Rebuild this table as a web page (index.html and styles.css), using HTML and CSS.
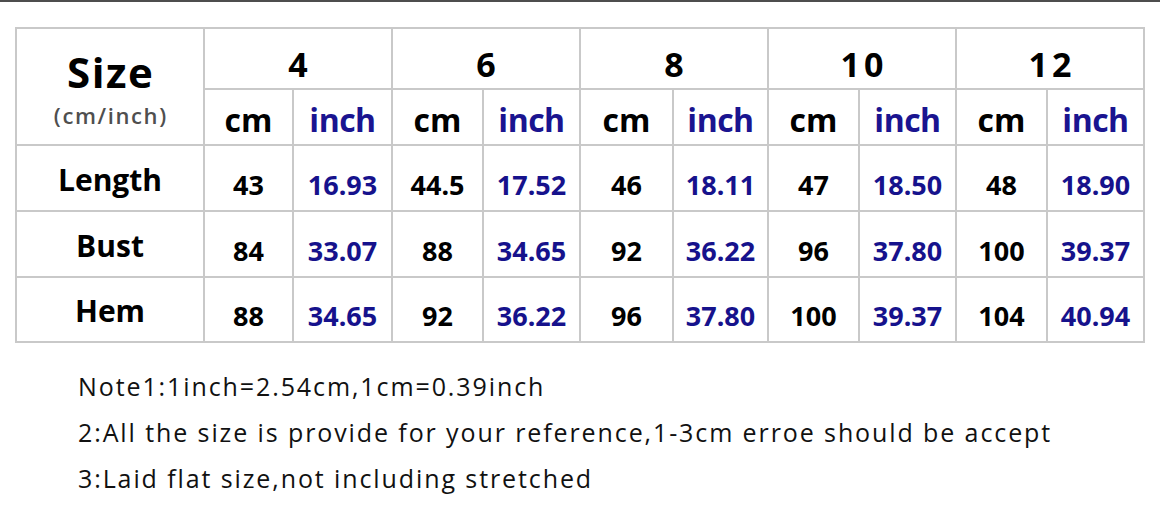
FILE: index.html
```html
<!DOCTYPE html>
<html>
<head>
<meta charset="utf-8">
<link rel="stylesheet" href="styles.css">
</head>
<body>
<div class="topbar"></div>
<div class="page">
  <div class="chart">
    <div class="cell corner"><span class="size">Size</span><span class="unit">(cm/inch)</span></div>
    <div class="cell num span2">4</div>
    <div class="cell num span2">6</div>
    <div class="cell num span2">8</div>
    <div class="cell num span2">10</div>
    <div class="cell num span2">12</div>
    <div class="cell hcm">cm</div><div class="cell hin">inch</div>
    <div class="cell hcm">cm</div><div class="cell hin">inch</div>
    <div class="cell hcm">cm</div><div class="cell hin">inch</div>
    <div class="cell hcm">cm</div><div class="cell hin">inch</div>
    <div class="cell hcm">cm</div><div class="cell hin">inch</div>

    <div class="cell label">Length</div>
    <div class="cell dcm">43</div><div class="cell din">16.93</div>
    <div class="cell dcm">44.5</div><div class="cell din">17.52</div>
    <div class="cell dcm">46</div><div class="cell din">18.11</div>
    <div class="cell dcm">47</div><div class="cell din">18.50</div>
    <div class="cell dcm">48</div><div class="cell din">18.90</div>

    <div class="cell label">Bust</div>
    <div class="cell dcm">84</div><div class="cell din">33.07</div>
    <div class="cell dcm">88</div><div class="cell din">34.65</div>
    <div class="cell dcm">92</div><div class="cell din">36.22</div>
    <div class="cell dcm">96</div><div class="cell din">37.80</div>
    <div class="cell dcm">100</div><div class="cell din">39.37</div>

    <div class="cell label">Hem</div>
    <div class="cell dcm">88</div><div class="cell din">34.65</div>
    <div class="cell dcm">92</div><div class="cell din">36.22</div>
    <div class="cell dcm">96</div><div class="cell din">37.80</div>
    <div class="cell dcm">100</div><div class="cell din">39.37</div>
    <div class="cell dcm">104</div><div class="cell din">40.94</div>
  </div>
  <div class="notes">
    <p class="note">Note1:1inch=2.54cm,1cm=0.39inch</p>
    <p class="note">2:All the size is provide for your reference,1-3cm erroe should be accept</p>
    <p class="note">3:Laid flat size,not including stretched</p>
  </div>
</div>
</body>
</html>
```

FILE: styles.css
```css
html, body {
  margin: 0;
  padding: 0;
  background: #ffffff;
}
body {
  width: 1160px;
  height: 517px;
  overflow: hidden;
  font-family: "Open Sans", "DejaVu Sans", sans-serif;
  color: #000;
}
.topbar {
  height: 2px;
  background: #4d4d4d;
}
.page {
  padding: 25px 0 0 15px;
}
.chart {
  display: grid;
  width: 1130px;
  box-sizing: border-box;
  grid-template-columns: 186px 87px 97px 89px 95px 91px 93px 89px 95px 89px 95px;
  grid-template-rows: 59px 54px 64px 64px 63px;
  gap: 2px;
  padding: 2px;
  background: #c9c9c9;
}
.cell {
  background: #fff;
  display: flex;
  align-items: center;
  justify-content: center;
  white-space: nowrap;
  box-sizing: border-box;
}
.corner {
  grid-row: span 2;
  flex-direction: column;
  padding-top: 6px;
}
.size {
  font-weight: 700;
  font-size: 42px;
  line-height: 44px;
  letter-spacing: 1.5px;
  padding-left: 1.5px;
}
.unit {
  font-weight: 600;
  font-size: 22px;
  line-height: 28px;
  color: #4f4f4f;
  margin-top: 7px;
  letter-spacing: 1.6px;
  padding-left: 1.6px;
}
.span2 {
  grid-column: span 2;
}
.num {
  font-weight: 700;
  font-size: 34px;
  padding-top: 10px;
  letter-spacing: 4px;
  padding-left: 4px;
}
.hcm, .hin {
  font-weight: 700;
  font-size: 32px;
  padding-top: 4px;
}
.hin {
  color: #1a1490;
  letter-spacing: -0.5px;
}
.label {
  font-weight: 700;
  font-size: 30px;
  padding-top: 2px;
}
.dcm, .din {
  font-family: "Noto Sans", "Open Sans", sans-serif;
  font-weight: 700;
  font-size: 27px;
  padding-top: 12px;
}
.din {
  color: #16128c;
}
.notes {
  padding: 20px 0 0 63px;
}
.note {
  margin: 0;
  font-size: 25px;
  line-height: 46px;
  color: #111;
  letter-spacing: 1.9px;
  white-space: nowrap;
}
```
